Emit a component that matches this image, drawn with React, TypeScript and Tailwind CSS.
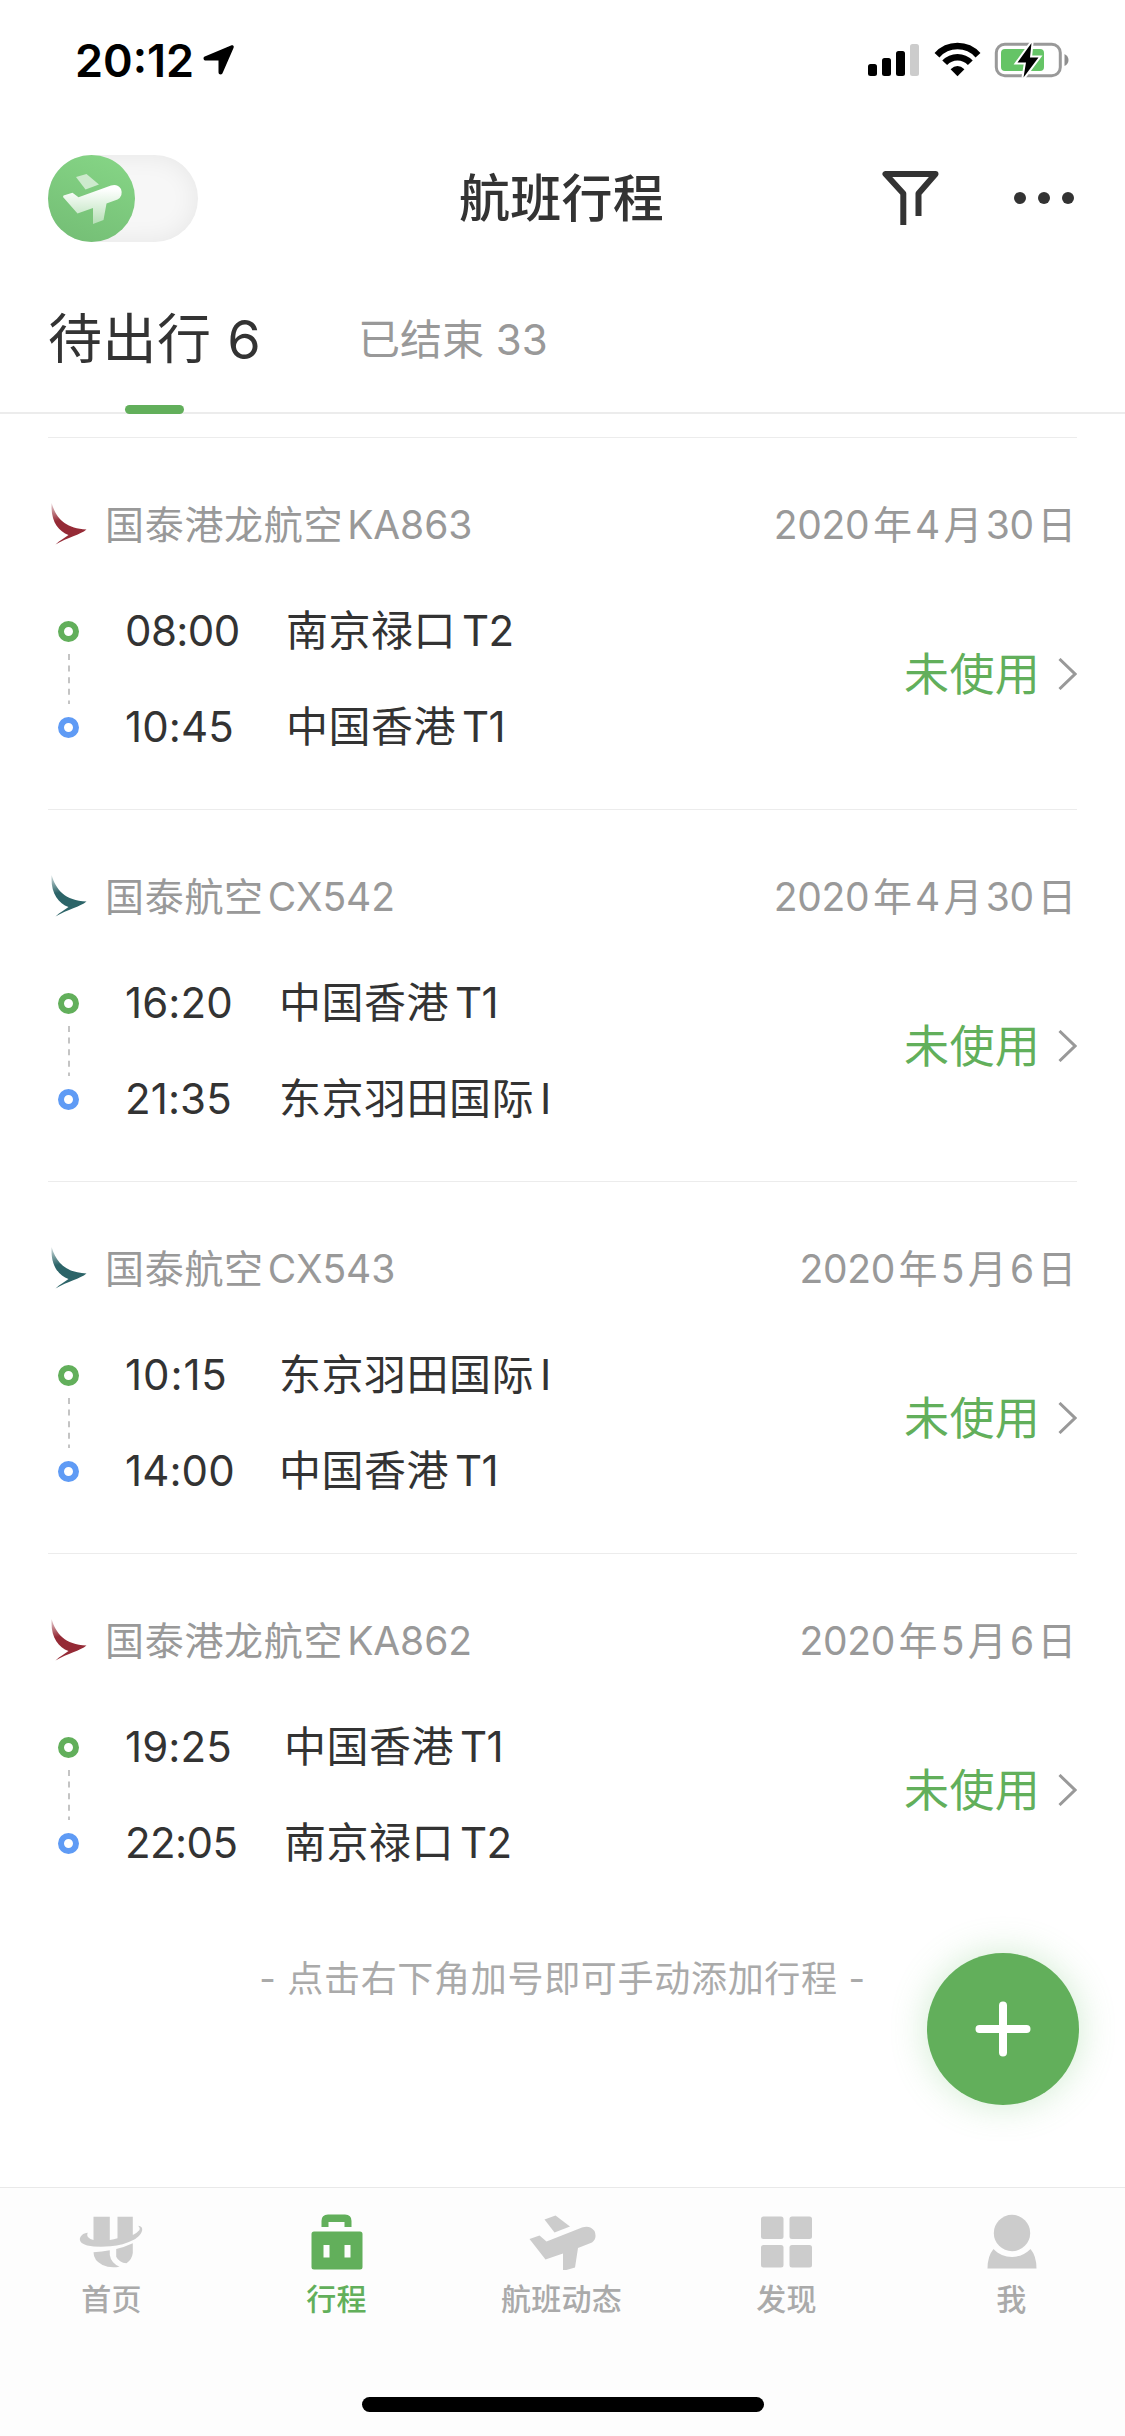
import type { ReactNode } from "react";

type Carrier = "dragon" | "cathay";

interface Stop {
  time: string;
  place: string;
  terminal: string;
}

interface Flight {
  carrier: Carrier;
  airline: string;
  code: string;
  date: [string, string, string];
  timeCol: string;
  from: Stop;
  to: Stop;
}

const FLIGHTS: Flight[] = [
  {
    carrier: "dragon",
    airline: "国泰港龙航空",
    code: "KA863",
    date: ["2020", "4", "30"],
    timeCol: "w-[161px]",
    from: { time: "08:00", place: "南京禄口", terminal: "T2" },
    to: { time: "10:45", place: "中国香港", terminal: "T1" },
  },
  {
    carrier: "cathay",
    airline: "国泰航空",
    code: "CX542",
    date: ["2020", "4", "30"],
    timeCol: "w-[154px]",
    from: { time: "16:20", place: "中国香港", terminal: "T1" },
    to: { time: "21:35", place: "东京羽田国际", terminal: "I" },
  },
  {
    carrier: "cathay",
    airline: "国泰航空",
    code: "CX543",
    date: ["2020", "5", "6"],
    timeCol: "w-[154px]",
    from: { time: "10:15", place: "东京羽田国际", terminal: "I" },
    to: { time: "14:00", place: "中国香港", terminal: "T1" },
  },
  {
    carrier: "dragon",
    airline: "国泰港龙航空",
    code: "KA862",
    date: ["2020", "5", "6"],
    timeCol: "w-[159px]",
    from: { time: "19:25", place: "中国香港", terminal: "T1" },
    to: { time: "22:05", place: "南京禄口", terminal: "T2" },
  },
];

// the digit 1 is narrow, so times are opened up by how many they hold
const TIME_TRACKING = ["tracking-[-0.600px]", "tracking-[0.100px]", "tracking-[0.900px]"];

function StatusBar() {
  return (
    <div className="flex h-[120px] items-center justify-between pl-[75px] pr-[56px]">
      <div className="flex items-center gap-[9px]">
        <span className="text-[45px] font-semibold leading-none text-black">20:12</span>
        <svg className="h-[30px] w-[31px]" viewBox="0 0 31 30" fill="#000">
          <path d="M28 .4C30 -.4 31.400 1 30.500 3L19.500 28.300C18.600 30.200 15.500 29.800 15.500 27.300V15.500H3C.4 15.500 -.4 12.600 1.800 11.600Z" />
        </svg>
      </div>
      <svg className="h-[36px] w-[201px]" viewBox="0 0 201 36">
        <rect x="0" y="22" width="9" height="12" rx="2.500" />
        <rect x="14" y="16" width="9" height="18" rx="2.500" />
        <rect x="28" y="9" width="9" height="25" rx="2.500" />
        <rect x="42" y="2" width="9" height="32" rx="2.500" fill="#ccc" />
        <g fill="none" stroke="#000" strokeWidth="6.600">
          <path d="M69 13.200A27.500 27.500 0 0 1 110 13.200" />
          <path d="M76.700 20.800A17.500 17.500 0 0 1 102.300 20.800" />
        </g>
        <path d="M89.500 34.200L82.600 27.200Q89.500 21 96.400 27.200Z" />
        <rect x="128.300" y="2.300" width="64" height="31.400" rx="8.500" fill="none" stroke="#999" strokeWidth="3" />
        <rect x="133" y="7" width="43" height="22" rx="4" fill="#65c466" />
        <path d="M196.500 12Q200.500 14 200.500 18T196.500 24Z" fill="#8f8f8f" />
        <path
          d="M163.500 1L149.500 20.500H158L155.500 35.500L170.500 15.500H162Z"
          stroke="#fff"
          strokeWidth="4"
          paintOrder="stroke"
        />
      </svg>
    </div>
  );
}

function ModeSwitch() {
  return (
    <div className="h-[87px] w-[150px] rounded-full bg-[#f7f7f7] shadow-[inset_0_0_26px_rgba(0,0,0,0.070)]">
      <svg className="size-[87px]" viewBox="0 0 87 87">
        <defs>
          <linearGradient id="knob" x1="0.700" y1="0" x2="0.300" y2="1">
            <stop offset="0" stopColor="#85d485" />
            <stop offset="1" stopColor="#75bf76" />
          </linearGradient>
          <linearGradient id="plane" x1="0" y1="0" x2="0" y2="1">
            <stop offset="0.100" stopColor="#fff" />
            <stop offset="1" stopColor="#fff" stopOpacity="0.450" />
          </linearGradient>
        </defs>
        <circle cx="43.500" cy="43.500" r="43.500" fill="url(#knob)" />
        <path d="M28 22L38.500 19L51 29.500L37.500 34.500Z" fill="#cdeacd" />
        <path
          d="M15.500 40.500L24.500 37.800L30.500 42.300L63 30.500Q69.500 28.500 73 34Q75.500 41 69.500 44.500L58.500 48.500L55.500 65L45 69V53L29.500 58.500L15 42Z"
          fill="url(#plane)"
        />
      </svg>
    </div>
  );
}

function Header() {
  return (
    <div className="grid h-[156px] grid-cols-3 items-center pl-12 pr-[50px]">
      <ModeSwitch />
      <h1 className="text-center text-[51px] font-medium leading-none tracking-[0.300px]">航班行程</h1>
      <div className="flex items-center justify-end gap-[75px]">
        <svg className="h-[54px] w-[57px]" viewBox="0 0 57 54" fill="none" stroke="#333" strokeWidth="6">
          <path d="M21.300 54V22.500L3.500 3H53.500L36.500 22.500V45" strokeLinejoin="round" />
        </svg>
        <svg className="h-3 w-[61px]" viewBox="0 0 61 12" fill="#333">
          <circle cx="6" cy="6" r="6" />
          <circle cx="30" cy="6" r="6" />
          <circle cx="54" cy="6" r="6" />
        </svg>
      </div>
    </div>
  );
}

function TripTabs() {
  return (
    <div className="relative flex h-[138px] items-center border-b-2 border-[#ececec] pb-[9px] pl-12 leading-none">
      <div className="w-[310px] text-[54px] tracking-[0.500px]">
        待出行 <span>6</span>
      </div>
      <div className="text-[42px] text-[#999]">
        已结束 <span>33</span>
      </div>
      <span className="absolute -bottom-0.5 left-[125px] h-[9px] w-[59px] rounded-full bg-[#62af5b]" />
    </div>
  );
}

function CarrierLogo({ carrier }: { carrier: Carrier }) {
  const color = carrier === "dragon" ? "#952a36" : "#2c6468";
  return (
    <svg className="h-[42px] w-9" viewBox="0 0 36 42">
      <defs>
        <linearGradient id={carrier} x1="0" y1="0" x2="0.200" y2="1">
          <stop offset="0" stopColor={color} stopOpacity="0.200" />
          <stop offset="0.450" stopColor={color} />
        </linearGradient>
      </defs>
      <path d="M.6 0C5 15 14 25.500 35.500 26.500C29 32 17 34 4.500 41.500C9 37 14 35 17.500 32C7 28 -.5 18 .6 0Z" fill={`url(#${carrier})`} />
    </svg>
  );
}

function StopRow({ stop, timeCol, ring }: { stop: Stop; timeCol: string; ring: string }) {
  const ones = stop.time.split("1").length - 1;
  return (
    <div className="flex h-[42px] items-center text-[42px] leading-none">
      <div className="w-[77px] pl-[10px]">
        <div className={`size-[21px] rounded-full border-[6px] ${ring}`} />
      </div>
      <div className={`${TIME_TRACKING[ones]} ${timeCol}`}>{stop.time}</div>
      <div className="tracking-[0.500px]">{stop.place}</div>
      <div className="ml-[6px] tracking-[-0.600px]">{stop.terminal}</div>
    </div>
  );
}

function FlightCard({ flight }: { flight: Flight }) {
  const [year, month, day] = flight.date;
  return (
    <div className="mx-12 h-[372px] border-t border-[#ececec] pt-[65px]">
      <div className="flex h-[42px] items-center text-[39px] leading-none text-[#999]">
        <div className="w-[57px] pl-[3px]">
          <CarrierLogo carrier={flight.carrier} />
        </div>
        <span className="tracking-[0.700px]">{flight.airline}</span>
        <span className="ml-1 tracking-[-0.100px]">{flight.code}</span>
        <div className="ml-auto mr-px flex gap-[3.500px] tracking-[-0.300px]">
          <span>{year}</span>年<span>{month}</span>月<span>{day}</span>日
        </div>
      </div>
      <div className="flex items-center justify-between pt-[65px]">
        <div>
          <StopRow stop={flight.from} timeCol={flight.timeCol} ring="border-[#62af5b]" />
          <div className="h-[54px] pl-5 pt-[2px]">
            <svg className="h-[50px] w-[2px]" viewBox="0 0 2 50">
              <path d="M1 0V50" stroke="#c4c4c4" strokeWidth="2" strokeDasharray="6 5.600" />
            </svg>
          </div>
          <StopRow stop={flight.to} timeCol={flight.timeCol} ring="border-[#5f9bf5]" />
        </div>
        <div className="flex items-center gap-[18px] pb-[10px] text-[45px] leading-none tracking-[0.300px] text-[#62af5b]">
          未使用
          <svg className="h-8 w-[19px]" viewBox="0 0 19 32" fill="none" stroke="#999" strokeWidth="3">
            <path d="M1.500 1L17 16L1.500 31" />
          </svg>
        </div>
      </div>
    </div>
  );
}

function TabItem({ label, active, children }: { label: string; active?: boolean; children: ReactNode }) {
  return (
    <div className={`flex flex-1 flex-col items-center ${active ? "text-[#62af5b]" : "text-[#aaa]"}`}>
      <svg className={`h-[58px] w-[70px] ${active ? "text-[#62af5b]" : "text-[#ccc]"}`} viewBox="0 0 70 58" fill="currentColor">
        {children}
      </svg>
      <span className="mt-[11px] text-[30px] font-medium leading-[36px] tracking-[0.300px]">{label}</span>
    </div>
  );
}

function BottomBar() {
  return (
    <div className="flex h-[249px] flex-col border-t border-[#e9e9e9] bg-[#fdfdfd]">
      <div className="-ml-px mr-px flex flex-1 pt-6">
        <TabItem label="首页">
          <path d="M10.800 20.700C10 22 10 24 11.200 25.300Q13 27.500 16.500 28V4.800H32.800V28Q37 27.500 40.500 26.300V4.800H55.800V23Q60 21 62.500 18Q63.500 16 61.200 13.700Q65.500 14 65.200 18C64.500 22 61 25.500 56.800 27.800Q46 33.500 33.500 34.300Q20 35.500 10.200 33.500Q3 31.500 2.800 27.300C3 24 6 21 10.800 20.700Z" />
          <path d="M16.500 40.300Q25 40 32.800 38.300V43Q34 51 42.500 54.700Q33 56.500 25.500 53Q16.500 48.500 16.500 40.300Z" />
          <path d="M39.200 37Q48 35 55.800 31.300V41Q55 47.500 49.500 51.300Q42 50.500 39.200 44.700Z" />
        </TabItem>
        <TabItem label="行程" active>
          <path d="M19.500 15V9Q19.500 2.500 26 2.500H43Q49.500 2.500 49.500 9V15H42.500V10H26.500V15Z" />
          <path
            fillRule="evenodd"
            d="M12 19.500H58Q60.500 19.500 60.500 22V55Q60.500 57.500 58 57.500H12Q9.500 57.500 9.500 55V22Q9.500 19.500 12 19.500ZM21.500 33V45.500H27.500V33ZM42.500 33V45.500H48.500V33Z"
          />
        </TabItem>
        <TabItem label="航班动态">
          <path d="M17.500 7.500L28.500 3.500L43 14.500L27.500 20.500Z" />
          <path d="M2.500 27L12.500 23.500L19.500 29.500L55 15.500Q63 13 67.500 19Q70.500 26 65 30.500L51 36L48 55.500L36 59V41.500L18.500 47.500Z" />
        </TabItem>
        <TabItem label="发现">
          <rect x="9" y="4.500" width="22.500" height="22.500" rx="2.500" />
          <rect x="37.500" y="4.500" width="22.500" height="22.500" rx="2.500" />
          <rect x="9" y="33" width="22.500" height="22.500" rx="2.500" />
          <rect x="37.500" y="33" width="22.500" height="22.500" rx="2.500" />
        </TabItem>
        <TabItem label="我">
          <circle cx="35" cy="21" r="18.200" />
          <path d="M16.500 37C26 47.500 44 47.500 53.500 37Q59.500 44 59.500 56.500H10.500Q10.500 44 16.500 37Z" />
        </TabItem>
      </div>
      <div className="mx-auto mb-6 h-[15px] w-[402px] rounded-full bg-black" />
    </div>
  );
}

export default function App() {
  return (
    <div className="relative flex h-[2436px] w-[1125px] flex-col overflow-hidden bg-white font-['Inter','Noto_Sans_CJK_SC',sans-serif] text-[#333]">
      <StatusBar />
      <Header />
      <TripTabs />
      <div className="flex-1 pt-[23px]">
        {FLIGHTS.map((flight) => (
          <FlightCard key={flight.code} flight={flight} />
        ))}
        <p className="pt-[36px] text-center text-[36px] leading-none tracking-[0.700px] text-[#aaa]">
          - 点击右下角加号即可手动添加行程 -
        </p>
      </div>
      <BottomBar />
      <button className="absolute left-[927px] top-[1953px] flex size-[152px] items-center justify-center rounded-full bg-[#62af5b] shadow-[0_0_36px_rgba(98,190,98,0.300)]">
        <svg className="size-14" viewBox="0 0 56 56" stroke="#fff" strokeWidth="8" strokeLinecap="round">
          <path d="M28 4.500V51.500M4.500 28H51.500" />
        </svg>
      </button>
    </div>
  );
}
